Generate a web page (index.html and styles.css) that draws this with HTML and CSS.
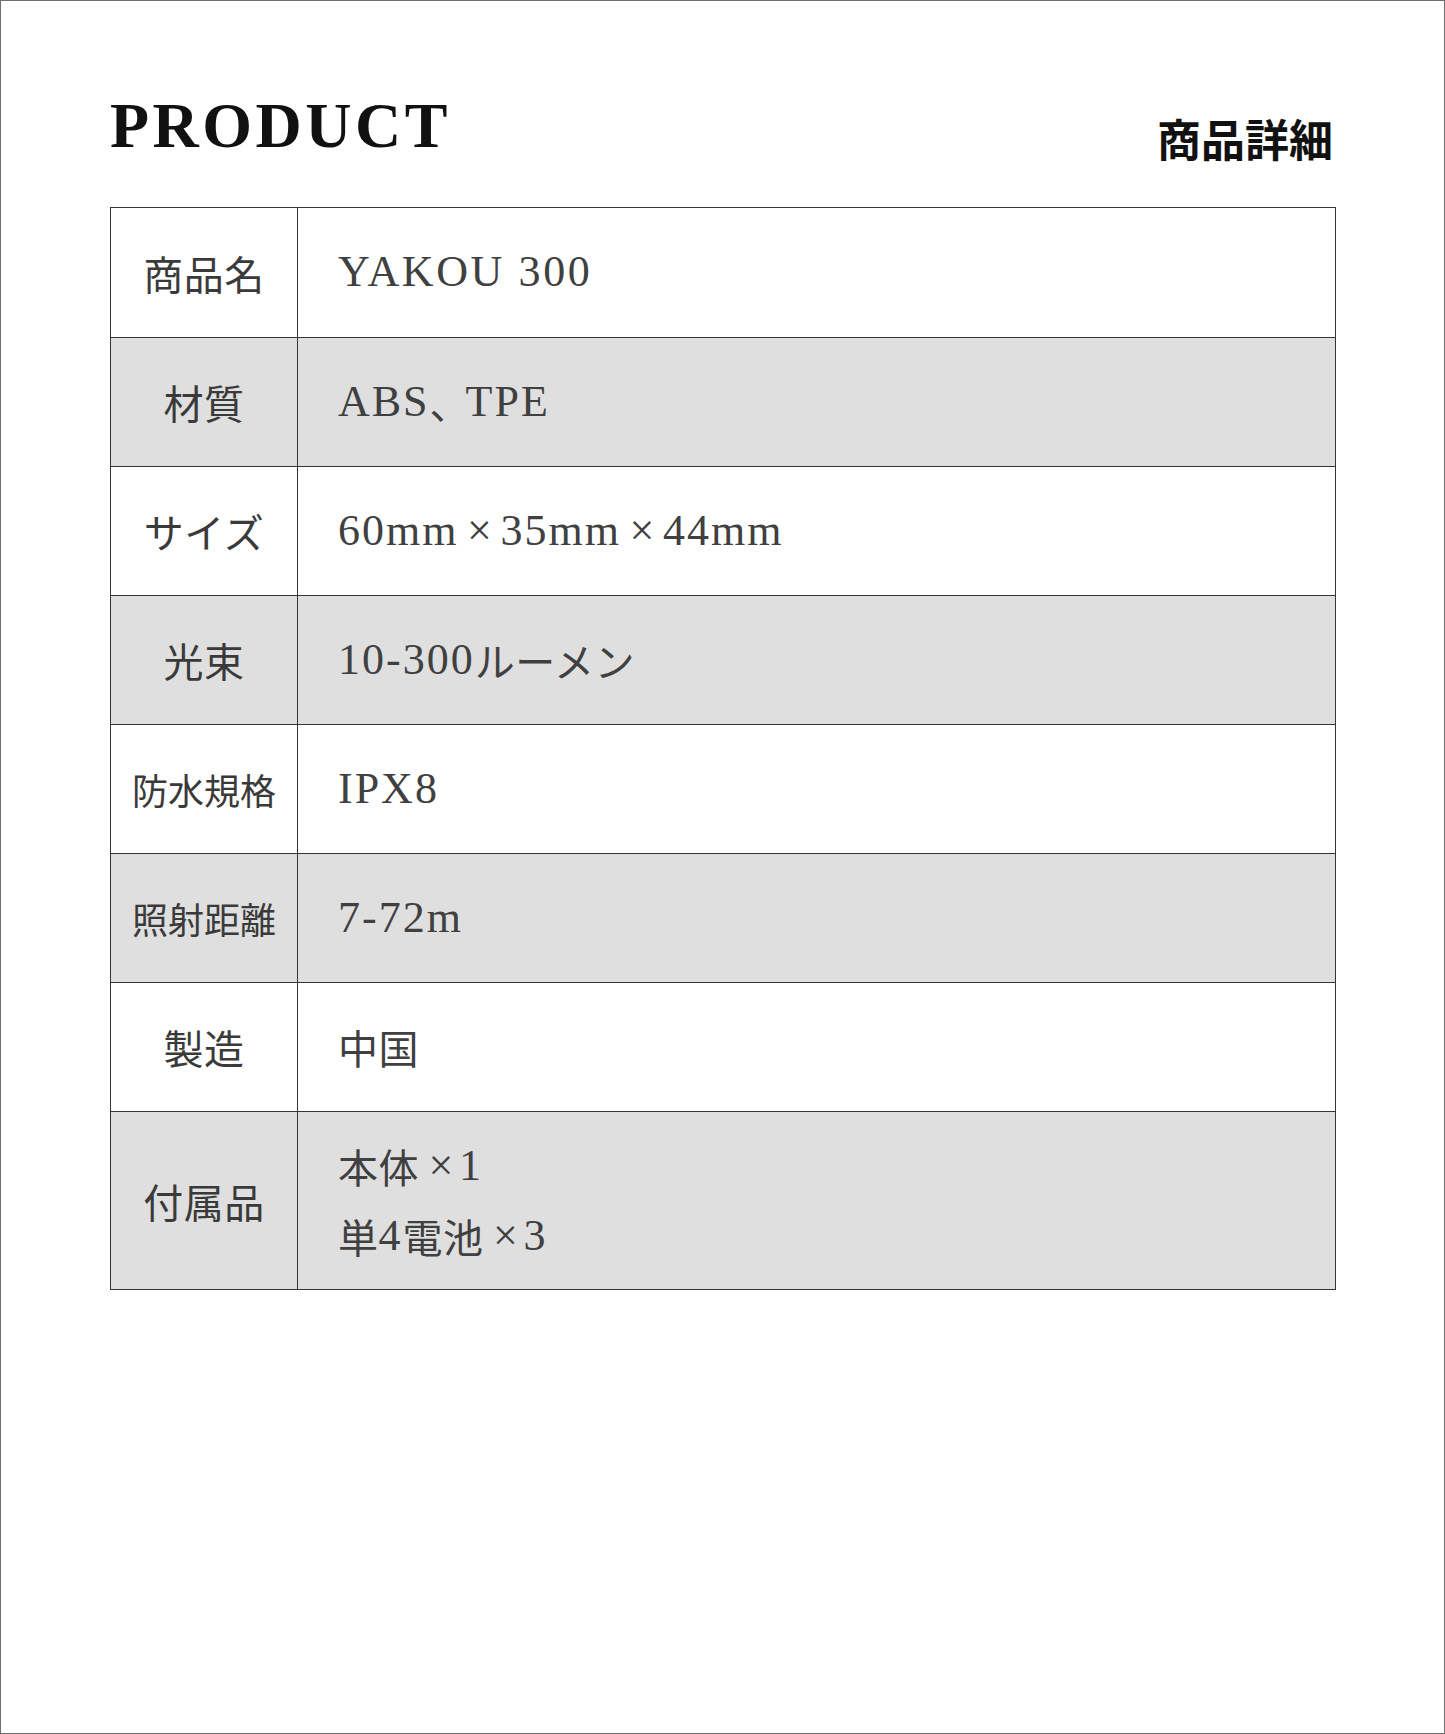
FILE: index.html
```html
<!DOCTYPE html>
<html lang="ja">
<head>
<meta charset="utf-8">
<title>PRODUCT 商品詳細</title>
<link rel="stylesheet" href="styles.css">
</head>
<body>
<div class="page">
  <header class="header">
    <h1 class="title">PRODUCT</h1>
    <div class="subtitle">商品詳細</div>
  </header>
  <div class="spec">
    <div class="row">
      <div class="label">商品名</div>
      <div class="value wide">YAKOU 300</div>
    </div>
    <div class="row alt">
      <div class="label">材質</div>
      <div class="value">ABS<span class="jp comma">、</span>TPE</div>
    </div>
    <div class="row">
      <div class="label">サイズ</div>
      <div class="value">60mm<span class="times">×</span>35mm<span class="times">×</span>44mm</div>
    </div>
    <div class="row alt">
      <div class="label">光束</div>
      <div class="value">10-300<span class="jp">ルーメン</span></div>
    </div>
    <div class="row">
      <div class="label small">防水規格</div>
      <div class="value">IPX8</div>
    </div>
    <div class="row alt">
      <div class="label small">照射距離</div>
      <div class="value">7-72m</div>
    </div>
    <div class="row">
      <div class="label">製造</div>
      <div class="value"><span class="jp">中国</span></div>
    </div>
    <div class="row alt tall">
      <div class="label">付属品</div>
      <div class="value multi">
        <div class="line"><span class="jp">本体</span> <span class="times">×</span>1</div>
        <div class="line"><span class="jp">単</span>4<span class="jp">電池</span> <span class="times">×</span>3</div>
      </div>
    </div>
  </div>
</div>
</body>
</html>
```
FILE: styles.css
```css
* {
  box-sizing: border-box;
}

html, body {
  margin: 0;
  padding: 0;
  background: #ffffff;
}

.page {
  width: 1445px;
  height: 1734px;
  border: 1px solid #6e6e6e;
  padding: 93px 108px 0 109px;
  background: #ffffff;
}

.header {
  display: flex;
  justify-content: space-between;
  align-items: flex-start;
  height: 113px;
}

.title {
  margin: 0;
  font-family: "Liberation Serif", "Times New Roman", serif;
  font-weight: 700;
  font-size: 64px;
  line-height: 64px;
  letter-spacing: 3.5px;
  color: #111111;
}

.subtitle {
  margin-top: 22px;
  margin-right: 3px;
  font-family: "Noto Sans CJK JP", sans-serif;
  font-weight: 700;
  font-size: 44px;
  line-height: 44px;
  color: #111111;
}

.spec {
  border-top: 1px solid #353535;
  border-left: 1px solid #353535;
}

.row {
  display: grid;
  grid-template-columns: 187px 1fr;
  height: 129px;
}

.row:first-child {
  height: 130px;
}

.row.tall {
  height: 178px;
}

.label,
.value {
  border-right: 1px solid #353535;
  border-bottom: 1px solid #353535;
  display: flex;
  align-items: center;
  color: #3a3a3a;
}

.row.alt .label,
.row.alt .value {
  background: #dfdfdf;
}

.label {
  justify-content: center;
  font-family: "Noto Sans CJK JP", sans-serif;
  font-weight: 400;
  font-size: 40px;
  line-height: 1;
  letter-spacing: 0.5px;
}

.label.small {
  font-size: 36px;
  letter-spacing: 0;
}

.value {
  padding-left: 40px;
  font-family: "Liberation Serif", "Times New Roman", "Noto Sans CJK JP", serif;
  font-size: 44px;
  line-height: 1.15;
  letter-spacing: 2px;
  color: #404040;
}

.value.wide {
  letter-spacing: 2.6px;
}

.value.multi {
  flex-direction: column;
  align-items: flex-start;
  justify-content: center;
}

.line {
  height: 70px;
  line-height: 70px;
  display: flex;
  align-items: center;
}

.jp {
  font-family: "Noto Sans CJK JP", sans-serif;
  font-size: 40px;
  letter-spacing: 0.5px;
}

.jp.comma {
  letter-spacing: -4px;
}

.times {
  display: inline-block;
  width: 42px;
  text-align: center;
  letter-spacing: 0;
}

.line .times {
  width: 36px;
  margin-left: 4px;
}
```
